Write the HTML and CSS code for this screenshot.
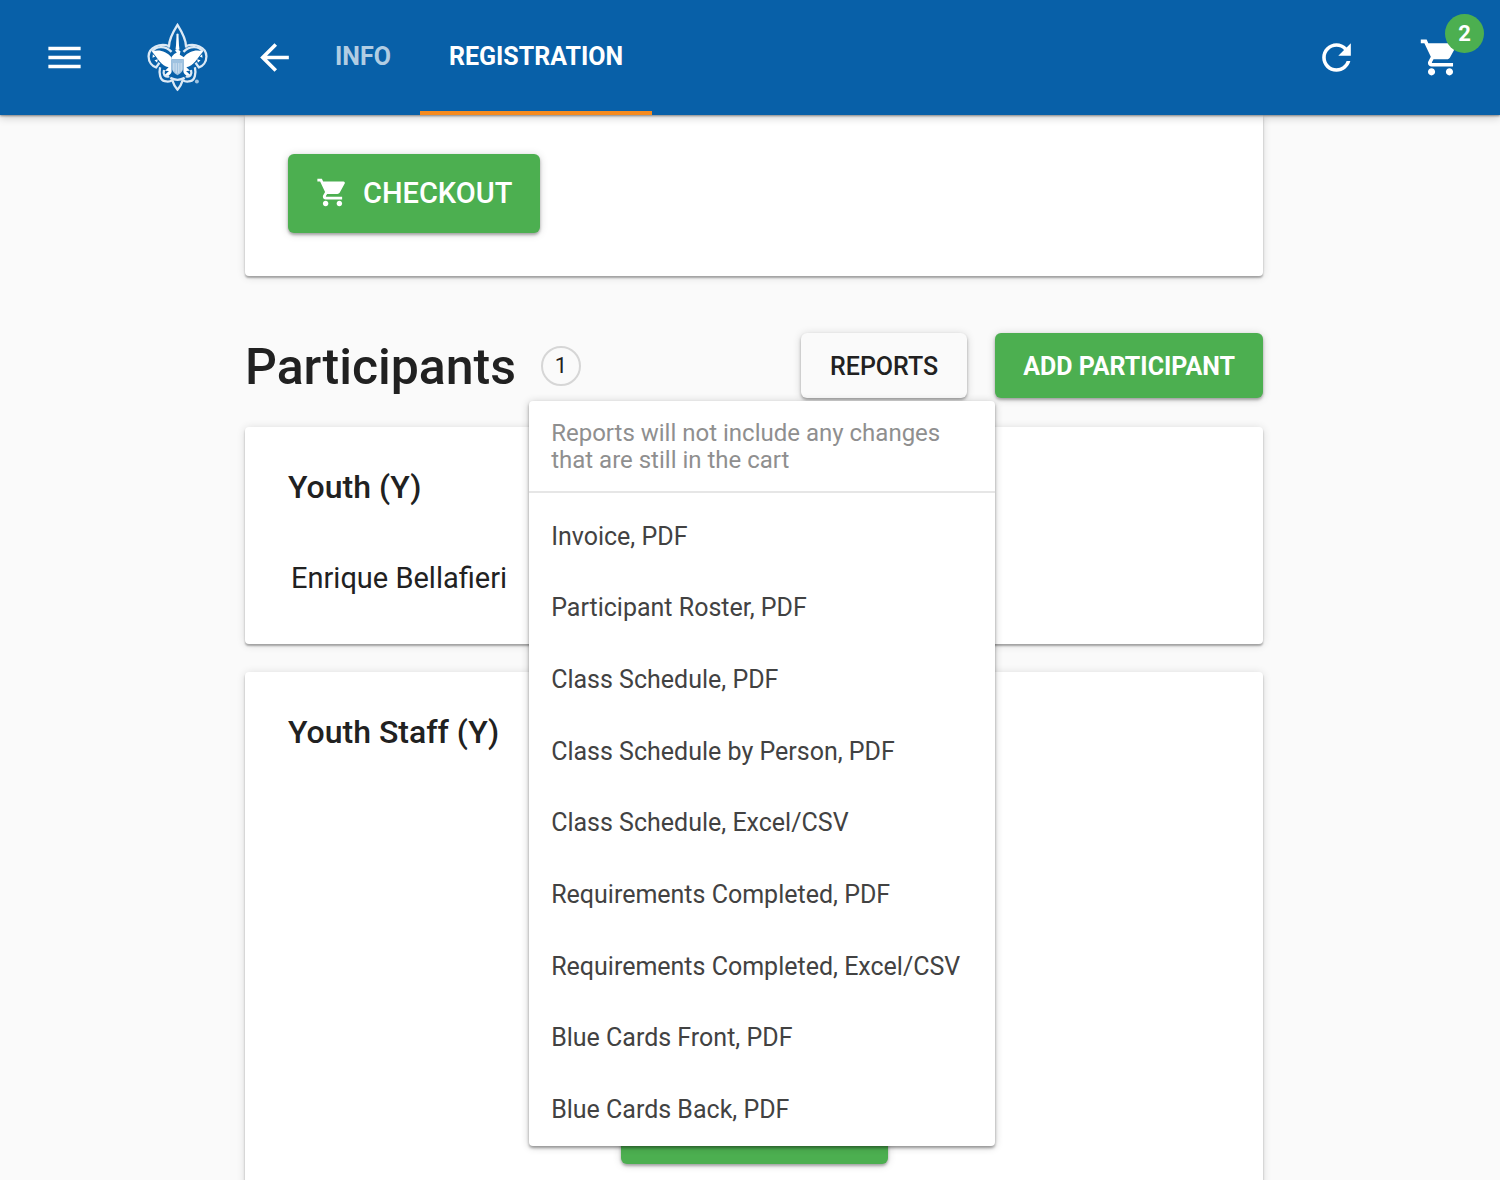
FILE: index.html
```html
<!DOCTYPE html>
<html lang="en">
<head>
<meta charset="utf-8">
<meta name="viewport" content="width=device-width, initial-scale=1">
<title>Registration</title>
<link rel="stylesheet" href="styles.css">
</head>
<body>
<header class="topbar">
  <button class="icon-button menu-button" type="button" aria-label="Menu">
    <svg class="icon" viewBox="0 0 24 24"><path d="M3 18h18v-2H3v2zm0-5h18v-2H3v2zm0-7v2h18V6H3z"/></svg>
  </button>
  <a class="logo-link" href="#" aria-label="Home">
    <svg class="logo" viewBox="52 37 184 210">
      <g class="logo-line">
        <path d="M118 112C117 94 125 73 144 43C163 73 171 94 170 112"/>
        <path d="M118 107C91 98 57 110 56 138C56 156 67 168 79 172L89 158"/>
        <path d="M170 107C197 98 231 110 232 138C232 156 221 168 209 172L199 158"/>
        <path d="M91 172C87 190 91 211 105 214C116 217 124 214 128 211C132 224 138 234 144 240C150 234 156 224 160 211C164 214 172 217 183 214C197 211 201 190 197 172"/>
        <path d="M103 180C99 193 105 204 119 199M185 180C189 193 183 204 169 199M122 204Q144 216 166 204"/>
        <path d="M144 70V120"/>
        <path d="M126 125C105 104 78 108 67 124M162 125C183 104 210 108 221 124"/>
      </g>
      <path class="logo-fill" d="M144 66L150 118H138Z"/>
      <path class="logo-fill" d="M66 124C87 117 109 122 126 142L126 186C121 197 114 201 105 195L118 183L106 182L117 172C94 167 85 146 66 124ZM222 124C201 117 179 122 162 142L162 186C167 197 174 201 183 195L170 183L182 182L171 172C194 167 203 146 222 124Z"/>
      <path class="logo-fill" d="M134 131L142 127L136 121Q146 115 153 123L151 134L165 142L162 148H125L127 139Z"/>
      <path class="logo-shield" d="M126 147H162V174Q160 188 144 196Q128 188 126 174Z"/>
      <path class="logo-stripes" d="M133 159V184M140 159V190M148 159V190M155 159V184"/>
      <path class="logo-fill" d="M69 132L76 139L68 143ZM74 150L84 147L82 158ZM219 132L212 139L220 143ZM214 150L204 147L206 158Z"/>
      <circle class="logo-shield" cx="203" cy="215" r="6"/>
    </svg>
  </a>
  <button class="icon-button" type="button" aria-label="Back">
    <svg class="icon" viewBox="0 0 24 24"><path d="M20 11H7.83l5.59-5.59L12 4l-8 8 8 8 1.41-1.41L7.83 13H20v-2z"/></svg>
  </button>
  <nav class="tabs">
    <a class="tab" href="#">INFO</a>
    <a class="tab tab-active" href="#" aria-current="page">REGISTRATION</a>
  </nav>
  <div class="topbar-actions">
    <button class="icon-button" type="button" aria-label="Refresh">
      <svg class="icon" viewBox="0 0 24 24"><path d="M17.65 6.35C16.2 4.9 14.21 4 12 4c-4.42 0-7.99 3.58-7.99 8s3.57 8 7.99 8c3.73 0 6.84-2.55 7.73-6h-2.08c-.82 2.33-3.04 4-5.65 4-3.31 0-6-2.69-6-6s2.69-6 6-6c1.66 0 3.14.69 4.22 1.78L13 11h7V4l-2.35 2.35z"/></svg>
    </button>
    <button class="icon-button" type="button" aria-label="Cart">
      <svg class="icon" viewBox="0 0 24 24"><path d="M7 18c-1.1 0-1.99.9-1.99 2S5.9 22 7 22s2-.9 2-2-.9-2-2-2zM1 2v2h2l3.6 7.59-1.35 2.45c-.16.28-.25.61-.25.96 0 1.1.9 2 2 2h12v-2H7.42c-.14 0-.25-.11-.25-.25l.03-.12.9-1.63h7.45c.75 0 1.41-.41 1.75-1.03l3.58-6.49A1.003 1.003 0 0 0 20 4H5.21l-.94-2H1zm16 16c-1.1 0-1.99.9-1.99 2s.89 2 1.99 2 2-.9 2-2-.9-2-2-2z"/></svg>
      <span class="badge">2</span>
    </button>
  </div>
</header>
<main class="scroller">
  <div class="page">
    <section class="card card-cart">
      <button class="button button-green button-large" type="button">
        <svg class="icon icon-small" viewBox="0 0 24 24"><path d="M7 18c-1.1 0-1.99.9-1.99 2S5.9 22 7 22s2-.9 2-2-.9-2-2-2zM1 2v2h2l3.6 7.59-1.35 2.45c-.16.28-.25.61-.25.96 0 1.1.9 2 2 2h12v-2H7.42c-.14 0-.25-.11-.25-.25l.03-.12.9-1.63h7.45c.75 0 1.41-.41 1.75-1.03l3.58-6.49A1.003 1.003 0 0 0 20 4H5.21l-.94-2H1zm16 16c-1.1 0-1.99.9-1.99 2s.89 2 1.99 2 2-.9 2-2-.9-2-2-2z"/></svg>
        CHECKOUT
      </button>
    </section>

    <div class="section-head">
      <h1 class="section-title">Participants</h1>
      <span class="count">1</span>
      <div class="section-actions">
        <div class="dropdown">
          <button class="button button-plain" type="button" aria-haspopup="menu" aria-expanded="true">REPORTS</button>
          <div class="menu">
            <p class="menu-note">Reports will not include any changes that are still in the cart</p>
            <ul class="menu-list">
              <li><a class="menu-item" href="#">Invoice, PDF</a></li>
              <li><a class="menu-item" href="#">Participant Roster, PDF</a></li>
              <li><a class="menu-item" href="#">Class Schedule, PDF</a></li>
              <li><a class="menu-item" href="#">Class Schedule by Person, PDF</a></li>
              <li><a class="menu-item" href="#">Class Schedule, Excel/CSV</a></li>
              <li><a class="menu-item" href="#">Requirements Completed, PDF</a></li>
              <li><a class="menu-item" href="#">Requirements Completed, Excel/CSV</a></li>
              <li><a class="menu-item" href="#">Blue Cards Front, PDF</a></li>
              <li><a class="menu-item" href="#">Blue Cards Back, PDF</a></li>
            </ul>
          </div>
        </div>
        <button class="button button-green" type="button">ADD PARTICIPANT</button>
      </div>
    </div>

    <section class="card card-group">
      <h2 class="card-title">Youth (Y)</h2>
      <ul class="people">
        <li><a class="person" href="#">Enrique Bellafieri</a></li>
      </ul>
    </section>

    <section class="card card-group card-empty">
      <h2 class="card-title">Youth Staff (Y)</h2>
      <button class="button button-green button-add" type="button" aria-label="Add participant"></button>
    </section>
  </div>
</main>
</body>
</html>
```
FILE: styles.css
```css
* {
  box-sizing: border-box;
}

body {
  margin: 0;
  height: 100vh;
  display: flex;
  flex-direction: column;
  background: #fafafa;
  color: #212121;
  font-family: Roboto, "Liberation Sans", sans-serif;
  font-size: 25px;
}

a {
  color: inherit;
  text-decoration: none;
}

ul {
  list-style: none;
  margin: 0;
  padding: 0;
}

button {
  font: inherit;
  border: 0;
  padding: 0;
  cursor: pointer;
}

.topbar {
  flex: none;
  height: 115px;
  display: flex;
  align-items: center;
  padding: 0 38px 0 43px;
  background: #0860a8;
  color: #fff;
  position: relative;
  z-index: 2;
  box-shadow: 0 1px 2px rgba(0, 0, 0, 0.4), 0 3px 8px rgba(0, 0, 0, 0.18);
}

.icon-button {
  position: relative;
  display: flex;
  background: none;
  color: inherit;
}

.icon {
  width: 43px;
  height: 43px;
  fill: currentColor;
}

.icon-small {
  width: 33px;
  height: 33px;
}

.logo-link {
  display: flex;
  margin: 0 45px 0 61px;
}

.logo {
  width: 61px;
  height: 69px;
}

.logo-line {
  fill: none;
  stroke: #dce9f5;
  stroke-width: 7;
}

.logo-fill {
  fill: #fff;
}

.logo-shield {
  fill: #9fc2e0;
}

.logo-stripes {
  fill: none;
  stroke: #d5e5f2;
  stroke-width: 3;
}

.tabs {
  display: flex;
  align-self: stretch;
  margin-left: 10px;
}

.tab {
  display: flex;
  align-items: center;
  padding: 2px 29px 0;
  border-bottom: 4px solid transparent;
  font-weight: 700;
  color: rgba(255, 255, 255, 0.7);
}

.tab-active {
  color: #fff;
  border-bottom-color: #f68b1f;
}

.topbar-actions {
  display: flex;
  gap: 61px;
  margin-left: auto;
}

.badge {
  position: absolute;
  top: -22px;
  right: -22px;
  width: 39px;
  height: 39px;
  border-radius: 50%;
  background: #4caf50;
  font-size: 22px;
  font-weight: 700;
  line-height: 39px;
  text-align: center;
}

.scroller {
  flex: 1;
  min-height: 0;
  overflow-y: auto;
  scrollbar-width: none;
}

.page {
  box-sizing: content-box;
  max-width: 1018px;
  margin: 0 auto;
  padding: 0 0 43px 8px;
}

.card {
  background: #fff;
  border-radius: 4px;
  padding: 43px;
  box-shadow: 0 2px 2px rgba(0, 0, 0, 0.3), 0 1px 8px rgba(0, 0, 0, 0.14);
}

.card-cart {
  padding-top: 39px;
  border-radius: 0 0 4px 4px;
}

.button {
  display: flex;
  align-items: center;
  justify-content: center;
  height: 65px;
  padding: 2px 29px 0;
  border-radius: 6px;
  font-weight: 500;
  box-shadow: 0 2px 3px rgba(0, 0, 0, 0.3), 0 1px 8px rgba(0, 0, 0, 0.16);
}

.button-green {
  padding: 2px 28px 0;
  background: #4caf50;
  color: #fff;
  font-weight: 700;
}

.button-plain {
  background: #fafafa;
  color: #212121;
}

.button-large {
  height: 79px;
  gap: 14px;
  padding: 0 28px 2px;
  font-size: 29px;
  font-weight: 500;
}

.button-add {
  width: 267px;
}

.section-head {
  display: flex;
  align-items: center;
  margin: 57px 0 29px;
}

.section-title {
  margin: 0;
  padding-top: 3px;
  font-size: 50px;
  font-weight: 500;
  line-height: 62px;
}

.count {
  width: 40px;
  height: 40px;
  margin-left: 25px;
  border: 2px solid #d6d6d6;
  border-radius: 50%;
  font-size: 22px;
  line-height: 36px;
  text-align: center;
}

.section-actions {
  display: flex;
  gap: 28px;
  margin-left: auto;
}

.dropdown {
  position: relative;
}

.menu {
  position: absolute;
  z-index: 1;
  top: 68px;
  right: -28px;
  width: 466px;
  background: #fff;
  border-radius: 4px;
  box-shadow: 0 2px 3px rgba(0, 0, 0, 0.35), 0 1px 9px rgba(0, 0, 0, 0.2);
}

.menu-note {
  margin: 0 0 8px;
  padding: 19px 22px 17px;
  border-bottom: 2px solid #e6e6e6;
  color: #8f8f8f;
  font-size: 24px;
  line-height: 27px;
}

.menu-list {
  display: grid;
  grid-auto-rows: 1fr;
  height: 645px;
}

.menu-list li {
  display: grid;
  align-items: center;
}

.menu-item {
  padding: 0 22px;
  color: #424242;
  line-height: 70px;
}

.card-group + .card-group {
  margin-top: 28px;
}

.card-title {
  margin: 0;
  font-size: 32px;
  font-weight: 500;
  line-height: 34px;
}

.people {
  margin-top: 51px;
  padding: 0 3px;
}

.person {
  display: block;
  font-size: 29px;
  line-height: 46px;
}

.card-empty {
  min-height: 535px;
  display: flex;
  flex-direction: column;
  align-items: center;
  justify-content: space-between;
}

.card-empty .card-title {
  align-self: flex-start;
}
```
